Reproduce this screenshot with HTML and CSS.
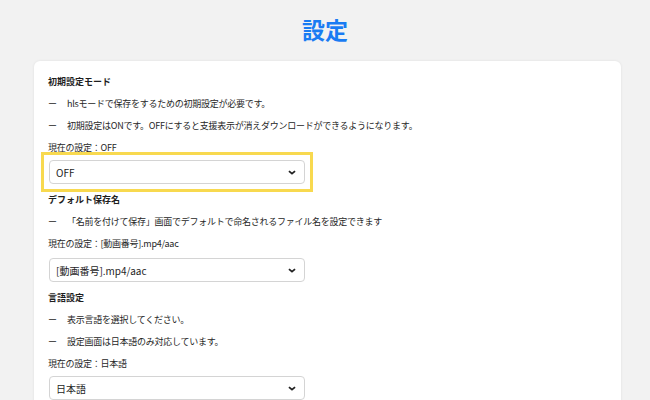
FILE: index.html
```html
<!DOCTYPE html>
<html lang="ja">
<head>
<meta charset="utf-8">
<title>設定</title>
<link rel="stylesheet" href="styles.css">
</head>
<body>
<h1 class="title">設定</h1>
<main class="card">
  <section class="section">
    <h2 class="heading">初期設定モード</h2>
    <p class="row"><span class="dash">ー</span>hlsモードで保存をするための初期設定が必要です。</p>
    <p class="row"><span class="dash">ー</span>初期設定はONです。OFFにすると支援表示が消えダウンロードができるようになります。</p>
    <p class="row">現在の設定：OFF</p>
    <div class="select highlight">
      <span class="value">OFF</span>
      <svg class="chev" viewBox="0 0 10 6" width="8" height="5"><path d="M1.2 1.2l3.8 3.3 3.8-3.3" fill="none" stroke="#222" stroke-width="2.2"/></svg>
    </div>
  </section>
  <section class="section">
    <h2 class="heading">デフォルト保存名</h2>
    <p class="row"><span class="dash">ー</span>「名前を付けて保存」画面でデフォルトで命名されるファイル名を設定できます</p>
    <p class="row">現在の設定：[動画番号].mp4/aac</p>
    <div class="select">
      <span class="value">[動画番号].mp4/aac</span>
      <svg class="chev" viewBox="0 0 10 6" width="8" height="5"><path d="M1.2 1.2l3.8 3.3 3.8-3.3" fill="none" stroke="#222" stroke-width="2.2"/></svg>
    </div>
  </section>
  <section class="section">
    <h2 class="heading">言語設定</h2>
    <p class="row"><span class="dash">ー</span>表示言語を選択してください。</p>
    <p class="row"><span class="dash">ー</span>設定画面は日本語のみ対応しています。</p>
    <p class="row">現在の設定：日本語</p>
    <div class="select last">
      <span class="value">日本語</span>
      <svg class="chev" viewBox="0 0 10 6" width="8" height="5"><path d="M1.2 1.2l3.8 3.3 3.8-3.3" fill="none" stroke="#222" stroke-width="2.2"/></svg>
    </div>
  </section>
</main>
</body>
</html>
```
FILE: styles.css
```css
html, body {
  margin: 0;
  padding: 0;
  background: #f2f2f2;
  font-family: "Noto Sans CJK JP", "Noto Sans", sans-serif;
  color: #333;
  height: 400px;
  overflow: hidden;
}
.title {
  margin: 0;
  padding-top: 12px;
  height: 61px;
  box-sizing: border-box;
  text-align: center;
  font-size: 23px;
  line-height: 34px;
  font-weight: 700;
  color: #1a7cf3;
}
.card {
  margin: 0 29px 0 34px;
  background: #fff;
  border-radius: 6px;
  box-shadow: 0 0 3px rgba(0,0,0,0.08);
  padding: 10px 14px 20px 14px;
  height: 400px;
}
.section {
  display: flex;
  flex-direction: column;
  margin-bottom: 5px;
}
.heading {
  margin: 0;
  font-size: 9px;
  line-height: 22px;
  font-weight: 700;
  color: #1e1e1e;
}
.row {
  margin: 0;
  font-size: 9px;
  line-height: 22px;
  letter-spacing: -0.25px;
  color: #262626;
}
.dash {
  display: inline-block;
  width: 19px;
}
.select {
  position: relative;
  width: 256px;
  height: 24px;
  box-sizing: border-box;
  margin: 3px 0 0 1px;
  border: 1px solid #d4d4d4;
  border-radius: 4px;
  display: flex;
  align-items: center;
  justify-content: space-between;
  padding: 0 8px 0 6px;
  font-size: 10px;
  color: #1e1e1e;
  background: #fff;
}
.highlight {
  margin-top: 1px;
}
.last {
  margin-top: 1px;
}
.highlight::after {
  content: "";
  position: absolute;
  top: -9px;
  left: -9px;
  right: -9px;
  bottom: -9px;
  border: 3px solid #f8d94f;
}
.chev {
  display: block;
}
```
